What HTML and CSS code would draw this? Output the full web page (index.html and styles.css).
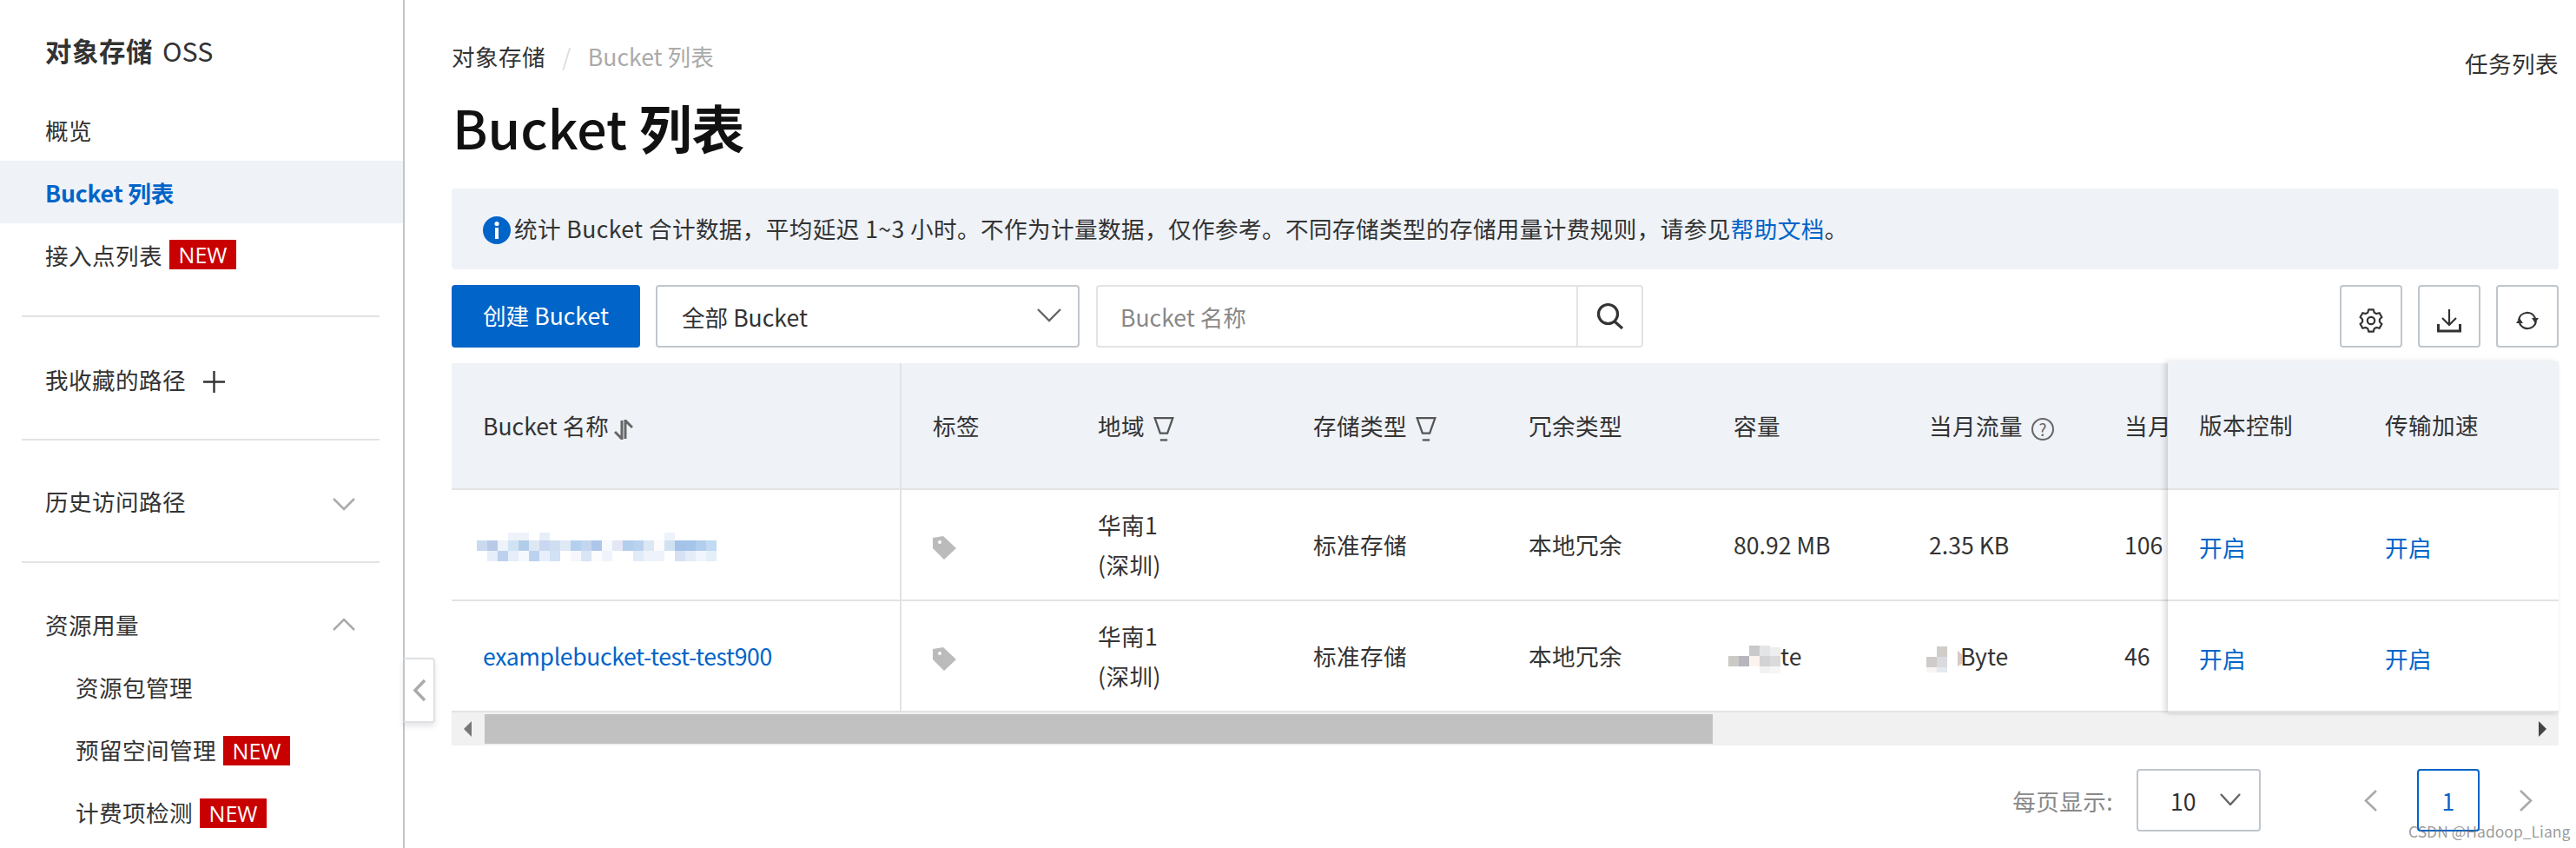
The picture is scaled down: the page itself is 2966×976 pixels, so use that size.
FILE: index.html
```html
<!DOCTYPE html>
<html lang="zh-CN">
<head>
    <meta charset="UTF-8">
    <meta name="viewport" content="width=device-width, initial-scale=1.0">
    <title>Bucket 列表</title>
    <link rel="stylesheet" href="styles.css">
</head>
<body>
    <aside class="sidebar">
        <div class="side-title"><b>对象存储</b> OSS</div>
        <a class="nav-item">概览</a>
        <a class="nav-item active">Bucket 列表</a>
        <a class="nav-item">接入点列表<span class="badge">NEW</span></a>
        <div class="side-line first"></div>
        <div class="side-group fav">我收藏的路径
            <svg class="plus" viewBox="0 0 25 25"><path d="M0 12.5H25M12.5 0V25"/></svg>
        </div>
        <div class="side-line"></div>
        <div class="side-group hist">历史访问路径
            <svg class="side-chev down" viewBox="0 0 26 15"><polyline points="1,1 13,13 25,1"/></svg>
        </div>
        <div class="side-line"></div>
        <div class="side-group res">资源用量
            <svg class="side-chev" viewBox="0 0 26 15"><polyline points="1,14 13,2 25,14"/></svg>
        </div>
        <a class="nav-item sub">资源包管理</a>
        <a class="nav-item sub">预留空间管理<span class="badge">NEW</span></a>
        <a class="nav-item sub">计费项检测<span class="badge">NEW</span></a>
    </aside>

    <div class="collapse">
        <svg viewBox="0 0 16 27"><polyline points="14,2 3,13.5 14,25"/></svg>
    </div>

    <main class="main">
        <div class="crumb-row">
            <div class="crumbs"><span>对象存储</span><i class="slash">/</i><span class="crumb-now">Bucket 列表</span></div>
            <a class="task-link">任务列表</a>
        </div>
        <h1 class="page-title"><span>Bucket</span> <b>列表</b></h1>

        <div class="notice">
            <svg class="info-icon" viewBox="0 0 32 32"><circle cx="16" cy="16" r="16"/><circle class="info-i" cx="16" cy="8.5" r="2.6"/><rect class="info-i" x="14" y="13" width="4" height="13"/></svg>
            <span>统计 Bucket 合计数据，平均延迟 1~3 小时。不作为计量数据，仅作参考。不同存储类型的存储用量计费规则，请参见<a class="link">帮助文档</a>。</span>
        </div>

        <div class="toolbar">
            <button class="btn-primary">创建 Bucket</button>
            <div class="select">全部 Bucket
                <svg class="chev" viewBox="0 0 28 16"><polyline points="1,1 14,14 27,1"/></svg>
            </div>
            <div class="search">
                <div class="search-input">Bucket 名称</div>
                <div class="search-btn">
                    <svg viewBox="0 0 32 31"><circle cx="13.5" cy="13.5" r="11"/><path d="M21 22L30 30"/></svg>
                </div>
            </div>
            <div class="tool-btns">
                <button class="icon-btn">
                    <svg class="gear" viewBox="0 0 28 28"><polygon points="11.3,1.3 16.7,1.3 17.75,4.73 20.16,6.12 23.66,5.3 26.36,9.98 23.9,12.61 23.9,15.39 26.36,18.02 23.66,22.7 20.16,21.88 17.75,23.27 16.7,26.7 11.3,26.7 10.25,23.27 7.84,21.88 4.34,22.7 1.64,18.02 4.1,15.39 4.1,12.61 1.64,9.98 4.34,5.3 7.84,6.12 10.25,4.73"/><circle cx="14" cy="14" r="4.2"/></svg>
                </button>
                <button class="icon-btn">
                    <svg class="download" viewBox="0 0 28 27"><path d="M14 0V18M6 10L14 18L22 10"/><path class="tray" d="M1.5 17V25H26.5V17"/></svg>
                </button>
                <button class="icon-btn">
                    <svg class="refresh" viewBox="0 0 28 24"><path d="M4 11A10 10 0 0 1 23 9"/><path d="M24 13A10 10 0 0 1 5 15"/><polygon points="19,9 27,9 23,15"/><polygon points="1,15 9,15 5,9"/></svg>
                </button>
            </div>
        </div>

        <div class="table-wrap">
            <table class="bucket-table">
                <colgroup>
                    <col class="c-name"><col class="c-tag"><col class="c-region"><col class="c-store"><col class="c-redun"><col class="c-size"><col class="c-flow"><col class="c-req">
                </colgroup>
                <thead>
                    <tr>
                        <th class="split num">Bucket 名称
                            <svg class="sort" viewBox="0 0 22 23"><path d="M9 1V22L1 14"/><path d="M13 22V1L21 9"/></svg>
                        </th>
                        <th>标签</th>
                        <th>地域
                            <svg class="filter" viewBox="0 0 22 27"><path d="M1 1H21L15 18H7Z"/><path d="M7 25.5H15"/></svg>
                        </th>
                        <th>存储类型
                            <svg class="filter" viewBox="0 0 22 27"><path d="M1 1H21L15 18H7Z"/><path d="M7 25.5H15"/></svg>
                        </th>
                        <th>冗余类型</th>
                        <th>容量</th>
                        <th>当月流量<span class="help">?</span></th>
                        <th>当月</th>
                    </tr>
                </thead>
                <tbody>
                    <tr>
                        <td class="split">
                            <svg class="mosaic-name" viewBox="0 0 276 33" shape-rendering="crispEdges">
                                <rect x="36" y="0" width="12" height="9" fill="#eef2fb"/><rect x="48" y="0" width="12" height="9" fill="#edf3f9"/><rect x="72" y="0" width="12" height="9" fill="#e8eef8"/><rect x="216" y="0" width="12" height="9" fill="#edf2fb"/>
                                <rect x="0" y="9" width="12" height="12" fill="#c9d9f0"/><rect x="12" y="9" width="12" height="12" fill="#b8cae8"/><rect x="24" y="9" width="12" height="12" fill="#eef2fb"/><rect x="36" y="9" width="12" height="12" fill="#d0e3f3"/><rect x="48" y="9" width="12" height="12" fill="#b2cdea"/><rect x="60" y="9" width="12" height="12" fill="#dee7f4"/><rect x="72" y="9" width="12" height="12" fill="#c9d8f0"/><rect x="84" y="9" width="12" height="12" fill="#cfdef0"/><rect x="96" y="9" width="12" height="12" fill="#deeaf6"/><rect x="108" y="9" width="12" height="12" fill="#b4d0ee"/><rect x="120" y="9" width="12" height="12" fill="#c4d6ee"/><rect x="132" y="9" width="12" height="12" fill="#adc6e9"/><rect x="144" y="9" width="12" height="12" fill="#f6f9fd"/><rect x="156" y="9" width="12" height="12" fill="#e3e7f5"/><rect x="168" y="9" width="12" height="12" fill="#b3cded"/><rect x="180" y="9" width="12" height="12" fill="#b9d3ee"/><rect x="192" y="9" width="12" height="12" fill="#dce7f5"/><rect x="204" y="9" width="12" height="12" fill="#fcfafb"/><rect x="216" y="9" width="12" height="12" fill="#d0e2f2"/><rect x="228" y="9" width="12" height="12" fill="#a5c3e9"/><rect x="240" y="9" width="12" height="12" fill="#a5c4ea"/><rect x="252" y="9" width="12" height="12" fill="#b3cdee"/><rect x="264" y="9" width="12" height="12" fill="#c0dbf3"/>
                                <rect x="12" y="21" width="12" height="12" fill="#e6eefa"/><rect x="24" y="21" width="12" height="12" fill="#bdd1ef"/><rect x="36" y="21" width="12" height="12" fill="#e5eef9"/><rect x="48" y="21" width="12" height="12" fill="#f5f9fd"/><rect x="60" y="21" width="12" height="12" fill="#bcd2ef"/><rect x="72" y="21" width="12" height="12" fill="#e8eefb"/><rect x="84" y="21" width="12" height="12" fill="#d0e2f3"/><rect x="108" y="21" width="12" height="12" fill="#f5f7fc"/><rect x="120" y="21" width="12" height="12" fill="#d9e4f5"/><rect x="132" y="21" width="12" height="12" fill="#fcfcfe"/><rect x="144" y="21" width="12" height="12" fill="#eff4fc"/><rect x="180" y="21" width="12" height="12" fill="#e1ecf8"/><rect x="192" y="21" width="12" height="12" fill="#eef3fb"/><rect x="204" y="21" width="12" height="12" fill="#eef2fa"/><rect x="228" y="21" width="12" height="12" fill="#d6e1f4"/><rect x="240" y="21" width="12" height="12" fill="#e3ecf7"/><rect x="252" y="21" width="12" height="12" fill="#f1f5fc"/><rect x="264" y="21" width="12" height="12" fill="#e3eff9"/>
                            </svg>
                        </td>
                        <td><svg class="tag" viewBox="0 0 27 27"><path fill-rule="evenodd" d="M0 2L12 0L27 14L13 27L0 14ZM8 5A2 2 0 1 0 8 9A2 2 0 1 0 8 5Z"/></svg></td>
                        <td>华南1<br>(深圳)</td>
                        <td>标准存储</td>
                        <td>本地冗余</td>
                        <td class="num">80.92 MB</td>
                        <td class="num">2.35 KB</td>
                        <td class="num">106</td>
                    </tr>
                    <tr>
                        <td class="split"><a class="link name-link">examplebucket-test-test900</a></td>
                        <td><svg class="tag" viewBox="0 0 27 27"><path fill-rule="evenodd" d="M0 2L12 0L27 14L13 27L0 14ZM8 5A2 2 0 1 0 8 9A2 2 0 1 0 8 5Z"/></svg></td>
                        <td>华南1<br>(深圳)</td>
                        <td>标准存储</td>
                        <td>本地冗余</td>
                        <td class="num">
                            <svg class="mosaic-size" viewBox="0 0 60 32" shape-rendering="crispEdges">
                                <rect x="24" y="0" width="12" height="12" fill="#c9c9cb"/><rect x="36" y="0" width="12" height="12" fill="#e3e4e6"/><rect x="48" y="2" width="12" height="10" fill="#eeeeee"/>
                                <rect x="0" y="12" width="12" height="12" fill="#cdcac6"/><rect x="12" y="12" width="12" height="12" fill="#b7b6bc"/><rect x="24" y="12" width="12" height="12" fill="#fbf4ee"/><rect x="36" y="12" width="12" height="12" fill="#d3d3d5"/><rect x="48" y="12" width="12" height="12" fill="#dadada"/>
                                <rect x="36" y="24" width="12" height="8" fill="#f2f2f2"/><rect x="48" y="24" width="12" height="8" fill="#f6f6f6"/>
                            </svg>te
                        </td>
                        <td class="num">
                            <svg class="mosaic-flow" viewBox="0 0 41 30" shape-rendering="crispEdges">
                                <rect x="12" y="0" width="12" height="12" fill="#d0ccc8"/>
                                <rect x="0" y="12" width="12" height="12" fill="#cfcbca"/><rect x="12" y="12" width="12" height="12" fill="#d9dbdf"/>
                                <rect x="0" y="24" width="12" height="6" fill="#f7f5f3"/><rect x="12" y="24" width="12" height="6" fill="#e4e8ef"/>
                                <polygon points="36,5 41,9 41,20 36,23" fill="#d8c8c8"/>
                            </svg>Byte
                        </td>
                        <td class="num">46</td>
                    </tr>
                </tbody>
            </table>

            <table class="fixed-table">
                <colgroup><col class="c-ver"><col class="c-speed"></colgroup>
                <thead><tr><th>版本控制</th><th>传输加速</th></tr></thead>
                <tbody>
                    <tr><td><a class="link">开启</a></td><td><a class="link">开启</a></td></tr>
                    <tr><td><a class="link">开启</a></td><td><a class="link">开启</a></td></tr>
                </tbody>
            </table>

            <div class="scrollbar">
                <div class="scroll-arrow"><svg viewBox="0 0 9 18"><polygon points="9,0 9,18 0,9"/></svg></div>
                <div class="scroll-thumb"></div>
                <div class="scroll-end"><svg viewBox="0 0 9 18"><polygon points="0,0 0,18 9,9"/></svg></div>
            </div>
        </div>

        <div class="pager">
            <span class="pager-label">每页显示:</span>
            <div class="page-size">10
                <svg class="chev" viewBox="0 0 24 14"><polyline points="1,1 12,13 23,1"/></svg>
            </div>
            <svg class="page-arrow prev" viewBox="0 0 15 25"><polyline points="14,1 2,12.5 14,24"/></svg>
            <div class="page-num">1</div>
            <svg class="page-arrow next" viewBox="0 0 15 25"><polyline points="1,1 13,12.5 1,24"/></svg>
        </div>
    </main>

    <div class="watermark">CSDN @Hadoop_Liang</div>
</body>
</html>
```

FILE: styles.css
```css
* {
    box-sizing: border-box;
}
html, body {
    margin: 0;
    height: 976px;
    overflow: hidden;
}
body {
    display: flex;
    position: relative;
    background: #fff;
    color: #333;
    font-family: "Noto Sans CJK SC", sans-serif;
    font-size: 26.6px;
    letter-spacing: 0.4px;
}
svg {
    fill: none;
    flex: none;
}

/* sidebar */
.sidebar {
    width: 466px;
    height: 976px;
    flex: none;
    border-right: 2px solid #c0c6cc;
    overflow: hidden;
}
.side-title {
    height: 113px;
    padding: 3px 0 0 52px;
    display: flex;
    align-items: center;
    gap: 11px;
    font-size: 30.4px;
    letter-spacing: 0;
}
.side-title b {
    letter-spacing: 0.6px;
}
.nav-item {
    height: 72px;
    padding-left: 52px;
    display: flex;
    align-items: center;
}
.nav-item.active {
    background: #eff3f8;
    color: #0064c8;
    font-weight: 700;
    letter-spacing: -0.2px;
}
.nav-item.sub {
    padding-left: 87px;
    padding-bottom: 3px;
}
.badge {
    width: 77px;
    height: 34px;
    margin-left: 8px;
    margin-top: 3px;
    background: #c80000;
    color: #fff;
    font-family: "Open Sans", sans-serif;
    font-size: 25px;
    letter-spacing: 0;
    line-height: 34px;
    text-align: center;
}
.nav-item:not(.sub) .badge {
    margin-top: 0;
}
.side-line {
    height: 2px;
    margin: 0 27px 0 25px;
    background: #e3e3e3;
}
.side-line.first {
    margin-top: 34px;
}
.side-group {
    padding: 0 0 0 52px;
    display: flex;
    align-items: center;
}
.side-group.fav {
    height: 140px;
    padding-top: 2px;
}
.side-group.hist {
    height: 139px;
    padding-right: 55px;
    justify-content: space-between;
}
.side-group.res {
    height: 108px;
    padding-top: 32px;
    padding-right: 55px;
    justify-content: space-between;
}
.plus {
    width: 25px;
    height: 25px;
    margin: 6px 0 0 20px;
    stroke: #333;
    stroke-width: 2.4;
}
.side-chev {
    width: 26px;
    height: 15px;
    stroke: #aaa;
    stroke-width: 2.6;
}
.side-chev.down {
    margin-top: 7px;
}

.collapse {
    position: absolute;
    left: 464px;
    top: 757px;
    width: 37px;
    height: 75px;
    background: #fff;
    border: 2px solid #dfe1e4;
    border-left: 2px solid #c0c6cc;
    border-radius: 0 4px 4px 0;
    box-shadow: 0 4px 6px rgba(0,0,0,0.1);
    display: flex;
    align-items: center;
    padding-left: 9px;
}
.collapse svg {
    width: 16px;
    height: 27px;
    stroke: #aaa;
    stroke-width: 3.5;
}

/* main */
.main {
    flex: 1;
    min-width: 0;
    padding: 46px 20px 0 54px;
}
.crumb-row {
    display: flex;
    justify-content: space-between;
    align-items: flex-start;
    height: 38px;
}
.crumbs {
    line-height: 38px;
}
.slash {
    margin: 0 19px;
    color: #ddd;
    font-style: normal;
}
.crumb-now {
    color: #aaa;
    letter-spacing: 0;
}
.task-link {
    margin-top: 8px;
    line-height: 38px;
}
.page-title {
    margin: 22px 0 0;
    padding-left: 1px;
    height: 80px;
    line-height: 80px;
    font-size: 60.8px;
    color: #111;
    font-weight: 500;
    letter-spacing: 0;
}
.page-title b {
    font-weight: 700;
}
.notice {
    margin-top: 31px;
    height: 93px;
    padding: 0 0 2px 36px;
    display: flex;
    align-items: center;
    gap: 4px;
    background: #eff2f7;
    border-radius: 4px;
}
.info-icon {
    width: 32px;
    height: 32px;
    margin-top: 5px;
    fill: #0064c8;
}
.info-i {
    fill: #fff;
}
.link {
    color: #0064c8;
}
.name-link {
    letter-spacing: -0.38px;
}

/* toolbar */
.toolbar {
    margin-top: 18px;
    height: 72px;
    display: flex;
}
.btn-primary {
    width: 217px;
    height: 72px;
    padding: 0 0 3px;
    border: none;
    border-radius: 4px;
    background: #0064c8;
    color: #fff;
    font: inherit;
    letter-spacing: 0;
}
.select {
    width: 488px;
    margin-left: 18px;
    padding: 0 19px 0 28px;
    border: 2px solid #c0c6cc;
    border-radius: 4px;
    display: flex;
    align-items: center;
    justify-content: space-between;
    letter-spacing: 0;
}
.chev {
    stroke: #666;
    stroke-width: 2.4;
}
.select .chev {
    width: 28px;
    height: 16px;
    margin-top: -2px;
}
.search {
    width: 630px;
    margin-left: 19px;
    border: 2px solid #e3e3e3;
    border-radius: 4px;
    display: flex;
}
.search-input {
    flex: 1;
    padding-left: 26px;
    display: flex;
    align-items: center;
    color: #888;
    border-right: 2px solid #e3e3e3;
    letter-spacing: 0;
}
.search-btn {
    width: 73px;
    display: flex;
    align-items: center;
    justify-content: center;
}
.search-btn svg {
    width: 32px;
    height: 31px;
    margin-top: -2px;
    stroke: #333;
    stroke-width: 3.2;
}
.tool-btns {
    margin-left: auto;
    display: flex;
    gap: 18px;
}
.icon-btn {
    width: 72px;
    height: 72px;
    padding: 10px 0 0;
    background: #fff;
    border: 2px solid #c0c6cc;
    border-radius: 4px;
    display: flex;
    align-items: center;
    justify-content: center;
}
.icon-btn svg {
    stroke: #333;
    stroke-width: 2.2;
}
.gear {
    width: 28px;
    height: 28px;
}
.download {
    width: 28px;
    height: 27px;
}
.download .tray {
    stroke-width: 3;
}
.refresh {
    width: 28px;
    height: 24px;
}
.refresh polygon {
    fill: #333;
    stroke: none;
}

/* table */
.table-wrap {
    position: relative;
    margin-top: 18px;
    height: 440px;
}
.bucket-table,
.fixed-table {
    border-collapse: separate;
    border-spacing: 0;
    table-layout: fixed;
}
.bucket-table {
    width: 2426px;
}
.c-name { width: 518px; }
.c-tag { width: 190px; }
.c-region { width: 248px; }
.c-store { width: 248px; }
.c-redun { width: 236px; }
.c-size { width: 225px; }
.c-flow { width: 225px; }
.c-req { width: 536px; }
th {
    height: 146px;
    padding: 0 0 2px 36px;
    background: #eff2f7;
    font-weight: 400;
    text-align: left;
    white-space: nowrap;
    border-bottom: 2px solid #e3e3e3;
}
td {
    height: 128px;
    padding: 0 0 0 36px;
    line-height: 45.6px;
    white-space: nowrap;
    border-bottom: 2px solid #e3e3e3;
}
.num {
    letter-spacing: 0;
}
.split {
    border-right: 2px solid #e3e3e3;
}
.fixed-table {
    position: absolute;
    right: 0;
    top: -2px;
    width: 450px;
    background: #fff;
    box-shadow: -4px 0 6px rgba(0,0,0,0.12), 0 2px 4px rgba(0,0,0,0.06);
}
.fixed-table th {
    height: 148px;
}
.fixed-table td {
    padding-top: 5px;
}
.c-ver { width: 214px; }
.c-speed { width: 236px; }
.sort {
    width: 22px;
    height: 23px;
    vertical-align: -5px;
    stroke: #666;
    stroke-width: 3;
}
.filter {
    width: 24px;
    height: 28px;
    margin-left: 4px;
    vertical-align: -7px;
    stroke: #555;
    stroke-width: 2.2;
}
.help {
    display: inline-block;
    width: 26px;
    height: 26px;
    margin-left: 10px;
    border: 2px solid #666;
    border-radius: 50%;
    color: #666;
    font-size: 19px;
    letter-spacing: 0;
    line-height: 22px;
    text-align: center;
    vertical-align: -1px;
}
.tag {
    width: 27px;
    height: 27px;
    fill: #bbb;
    vertical-align: middle;
}
.mosaic-name {
    display: block;
    width: 276px;
    height: 33px;
    margin: 0 0 0 -7px;
    position: relative;
    top: 2px;
}
.mosaic-size {
    width: 60px;
    height: 32px;
    margin-left: -6px;
    vertical-align: middle;
}
.mosaic-flow {
    width: 41px;
    height: 30px;
    margin: 0 -2px 0 -3px;
    vertical-align: middle;
}

/* scrollbar */
.scrollbar {
    height: 38px;
    background: #f1f1f1;
    display: flex;
    align-items: center;
}
.scroll-arrow {
    width: 38px;
    padding-left: 14px;
    display: flex;
}
.scroll-arrow svg,
.scroll-end svg {
    width: 9px;
    height: 18px;
}
.scroll-arrow polygon {
    fill: #777;
}
.scroll-end polygon {
    fill: #444;
}
.scroll-thumb {
    width: 1414px;
    height: 34px;
    background: #c1c1c1;
}
.scroll-end {
    flex: 1;
    padding-right: 14px;
    display: flex;
    justify-content: flex-end;
}

/* pager */
.pager {
    margin-top: 27px;
    height: 72px;
    display: flex;
    align-items: center;
}
.pager-label {
    margin-left: auto;
    color: #888;
}
.page-size {
    width: 143px;
    height: 72px;
    margin-left: 27px;
    padding: 0 21px 0 37px;
    border: 2px solid #c0c6cc;
    border-radius: 4px;
    display: flex;
    align-items: center;
    justify-content: space-between;
    letter-spacing: 0;
}
.page-size .chev {
    width: 24px;
    height: 14px;
    margin-top: -2px;
}
.page-arrow {
    width: 15px;
    height: 25px;
    stroke: #aaa;
    stroke-width: 2.6;
}
.page-arrow.prev {
    margin: 0 46px 0 119px;
}
.page-arrow.next {
    margin: 0 30px 0 46px;
}
.page-num {
    width: 72px;
    height: 72px;
    border: 2px solid #0064c8;
    border-radius: 4px;
    color: #0064c8;
    display: flex;
    align-items: center;
    justify-content: center;
}

.watermark {
    position: absolute;
    left: 2773px;
    top: 941px;
    color: rgba(110,110,110,0.7);
    font-size: 17.5px;
    letter-spacing: 0;
    line-height: 32px;
    white-space: nowrap;
}
```
